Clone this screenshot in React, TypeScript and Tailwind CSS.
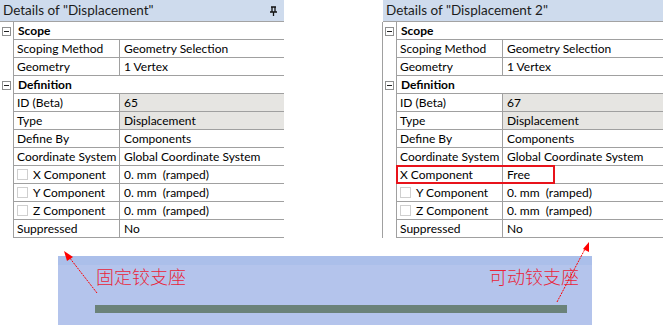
import React from 'react';

type Row =
  | { kind: 'section'; label: string }
  | { kind: 'prop'; label: string; value: string; gray?: boolean; check?: boolean; mark?: boolean };

const leftRows: Row[] = [
  { kind: 'section', label: 'Scope' },
  { kind: 'prop', label: 'Scoping Method', value: 'Geometry Selection' },
  { kind: 'prop', label: 'Geometry', value: '1 Vertex' },
  { kind: 'section', label: 'Definition' },
  { kind: 'prop', label: 'ID (Beta)', value: '65', gray: true },
  { kind: 'prop', label: 'Type', value: 'Displacement', gray: true },
  { kind: 'prop', label: 'Define By', value: 'Components' },
  { kind: 'prop', label: 'Coordinate System', value: 'Global Coordinate System' },
  { kind: 'prop', label: 'X Component', value: '0. mm  (ramped)', check: true },
  { kind: 'prop', label: 'Y Component', value: '0. mm  (ramped)', check: true },
  { kind: 'prop', label: 'Z Component', value: '0. mm  (ramped)', check: true },
  { kind: 'prop', label: 'Suppressed', value: 'No' },
];

const rightRows: Row[] = [
  { kind: 'section', label: 'Scope' },
  { kind: 'prop', label: 'Scoping Method', value: 'Geometry Selection' },
  { kind: 'prop', label: 'Geometry', value: '1 Vertex' },
  { kind: 'section', label: 'Definition' },
  { kind: 'prop', label: 'ID (Beta)', value: '67', gray: true },
  { kind: 'prop', label: 'Type', value: 'Displacement', gray: true },
  { kind: 'prop', label: 'Define By', value: 'Components' },
  { kind: 'prop', label: 'Coordinate System', value: 'Global Coordinate System' },
  { kind: 'prop', label: 'X Component', value: 'Free', mark: true },
  { kind: 'prop', label: 'Y Component', value: '0. mm  (ramped)', check: true },
  { kind: 'prop', label: 'Z Component', value: '0. mm  (ramped)', check: true },
  { kind: 'prop', label: 'Suppressed', value: 'No' },
];

const MinusBox = () => (
  <div className="w-[9px] h-[9px] border border-[#8e8f8f] bg-white flex items-center justify-center">
    <div className="w-[5px] h-px bg-[#222]" />
  </div>
);

const PropRow: React.FC<{ row: Row }> = ({ row }) => {
  if (row.kind === 'section') {
    return (
      <div className="flex h-[18px]">
        <div className="w-[13px] shrink-0 flex items-center justify-center">
          <MinusBox />
        </div>
        <div className="flex-1 border-l border-b border-[#a0a0a0] px-[4px] flex items-center font-bold">
          {row.label}
        </div>
      </div>
    );
  }
  return (
    <div className="flex h-[18px] relative">
      <div className="w-[13px] shrink-0" />
      <div className="w-[107px] shrink-0 border-l border-b border-r border-[#a0a0a0] pl-[3px] flex items-center gap-[5px] whitespace-nowrap overflow-hidden">
        {row.check && <div className="w-[11px] h-[11px] border border-[#cfcfcf] bg-white shrink-0" />}
        <span>{row.label}</span>
      </div>
      <div
        className={`flex-1 border-b border-[#a0a0a0] px-[4px] flex items-center whitespace-pre ${row.gray ? 'bg-[#e6e5e2]' : 'bg-white'}`}
      >
        {row.value}
      </div>
      {row.mark && (
        <div className="absolute left-[13px] top-[-1px] w-[159px] h-[19px] border-2 border-[#e8131b]" />
      )}
    </div>
  );
};

const Panel: React.FC<{ title: string; rows: Row[]; pin?: boolean; right?: boolean }> = ({ title, rows, pin, right }) => (
  <div className={`flex flex-col shrink-0 ${right ? 'w-[300px]' : 'w-[284px]'}`}>
    <div className="h-[22px] bg-[#cedbed] flex items-center justify-between pl-[3px] pr-[6px] border-b border-[#a3a3a3] text-[13.5px] text-[#1c1c1c]">
      <span>{title}</span>
      {pin && (
        <svg width="9" height="10" viewBox="0 0 9 10">
          <path d="M2 1h5M3 1v5M6 1v5M1 6h7M4.5 6v4" stroke="#111" strokeWidth="1.3" fill="none" />
        </svg>
      )}
    </div>
    <div className={right ? 'border-l border-[#a0a0a0] -ml-px' : ''}>
      {rows.map((r, i) => (
        <PropRow key={i} row={r} />
      ))}
    </div>
  </div>
);

export default function App() {
  return (
    <div
      className="relative w-[663px] h-[325px] bg-white overflow-hidden text-[12px] text-black"
      style={{ fontFamily: 'Lato, "Noto Sans CJK SC", sans-serif' }}
    >
      <div className="flex gap-[99px]">
        <Panel title={'Details of "Displacement"'} rows={leftRows} pin />
        <Panel title={'Details of "Displacement 2"'} rows={rightRows} right />
      </div>

      <div className="ml-[58px] mt-[18px] w-[534px] h-[69px] bg-[#b4c4ec] border-t-[9px] border-[#abbfea] relative">
        <div
          className="flex justify-between pl-[38px] pr-[13px] pt-[1px] text-[18px] leading-[20px] text-[#e8243a] font-light"
          style={{ fontFamily: '"Noto Sans CJK SC", serif' }}
        >
          <span>固定铰支座</span>
          <span>可动铰支座</span>
        </div>
        <div className="ml-[37px] mr-[25px] mt-[19px] h-[8px] bg-[#6b8279]" />
      </div>

      <svg className="absolute inset-0 pointer-events-none" width="663" height="325">
        <line x1="97" y1="293" x2="69" y2="257" stroke="#ff0000" strokeWidth="1" strokeDasharray="2 1" />
        <polygon points="64,251 73,257 67,261" fill="#ff0000" />
        <line x1="557" y1="302" x2="585" y2="249" stroke="#ff0000" strokeWidth="1" strokeDasharray="2 1" />
        <polygon points="589,242 589,252 583,249" fill="#ff0000" />
      </svg>
    </div>
  );
}
